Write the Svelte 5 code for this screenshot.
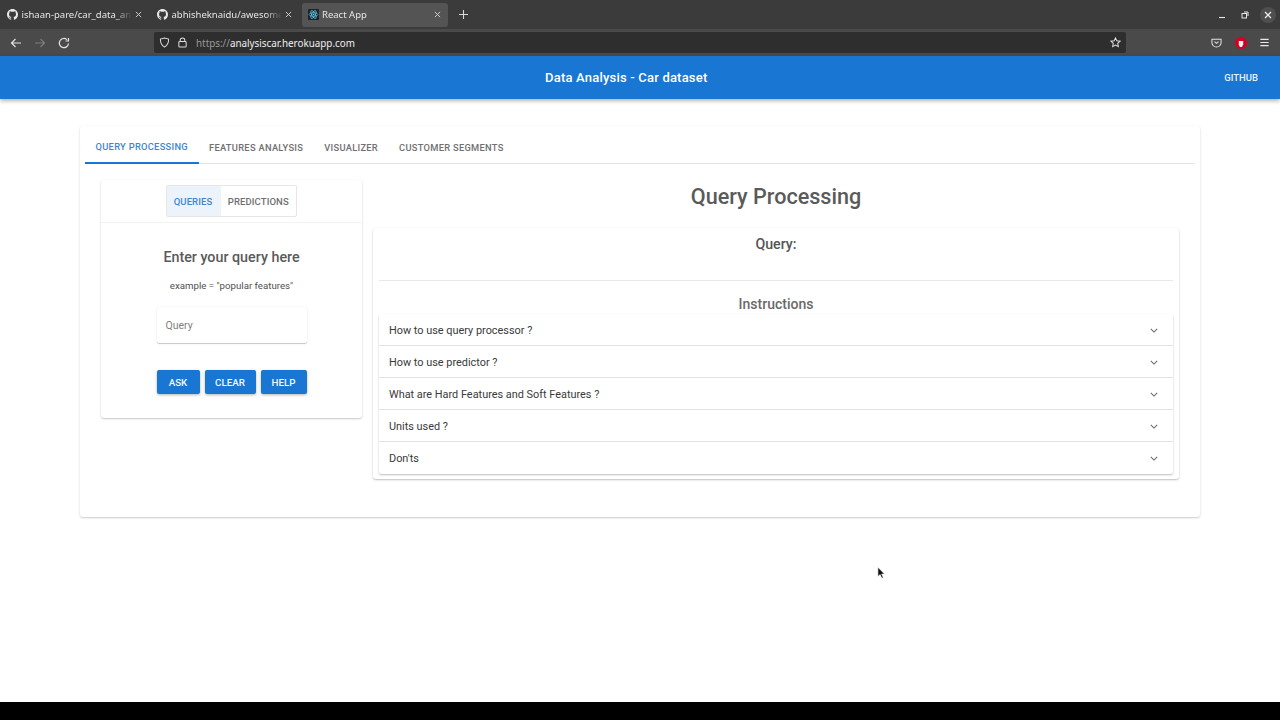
<script>
    const browserTabs = [
        { title: 'ishaan-pare/car_data_analysis', icon: 'github' },
        { title: 'abhisheknaidu/awesome-readme', icon: 'github' },
        { title: 'React App', icon: 'react', active: true }
    ];
    const pageTabs = ['Query Processing', 'Features Analysis', 'Visualizer', 'Customer Segments'];
    const questions = [
        'How to use query processor ?',
        'How to use predictor ?',
        'What are Hard Features and Soft Features ?',
        'Units used ?',
        "Don'ts"
    ];
    const actions = ['Ask', 'Clear', 'Help'];
</script>

<div class="page">
    <header class="chrome">
        <div class="tabstrip">
            {#each browserTabs as tab}
                <div class="btab" class:active={tab.active}>
                    {#if tab.icon === 'github'}
                        <svg class="favicon" viewBox="0 0 16 16"><path fill="#e8e8e8" d="M8 0C3.58 0 0 3.58 0 8c0 3.54 2.29 6.53 5.47 7.59.4.07.55-.17.55-.38v-1.49c-2.01.37-2.53-.49-2.69-.94-.09-.23-.48-.94-.82-1.13-.28-.15-.68-.52-.01-.53.63-.01 1.08.58 1.23.82.72 1.21 1.87.87 2.33.66.07-.52.28-.87.51-1.07-1.78-.2-3.64-.89-3.64-3.95 0-.87.31-1.59.82-2.15-.08-.2-.36-1.02.08-2.12 0 0 .67-.21 2.2.82a7.4 7.4 0 0 1 4 0c1.53-1.04 2.2-.82 2.2-.82.44 1.1.16 1.92.08 2.12.51.56.82 1.27.82 2.15 0 3.07-1.87 3.75-3.65 3.95.29.25.54.73.54 1.48v2.2c0 .21.15.46.55.38A8 8 0 0 0 16 8c0-4.42-3.58-8-8-8z"/></svg>
                    {:else}
                        <svg class="favicon" viewBox="0 0 16 16" fill="none" stroke="#61dafb" stroke-width="0.9"><rect width="16" height="16" rx="1" fill="#20232a" stroke="none"/><ellipse cx="8" cy="8" rx="6.5" ry="2.6"/><ellipse cx="8" cy="8" rx="6.5" ry="2.6" transform="rotate(60 8 8)"/><ellipse cx="8" cy="8" rx="6.5" ry="2.6" transform="rotate(120 8 8)"/><circle cx="8" cy="8" r="1.2" fill="#61dafb" stroke="none"/></svg>
                    {/if}
                    <span class="btitle">{tab.title}</span>
                    <svg class="bclose" viewBox="0 0 8 8"><path d="M1 1l6 6M7 1L1 7" stroke="#cfcfcf" stroke-width="1.1"/></svg>
                </div>
            {/each}
            <svg class="plus" viewBox="0 0 10 10"><path d="M5 0v10M0 5h10" stroke="#d8d8d8" stroke-width="1.2"/></svg>
            <div class="winctl">
                <svg viewBox="0 0 8 8" width="8" height="8"><path d="M1 6.5h6" stroke="#e8e8e8" stroke-width="1.1"/></svg>
                <svg viewBox="0 0 8 8" width="8" height="8" fill="none" stroke="#e8e8e8"><rect x="1" y="2.5" width="4.5" height="4.5"/><path d="M3 1h4v4"/></svg>
                <span class="winclose"><svg viewBox="0 0 8 8" width="8" height="8"><path d="M1 1l6 6M7 1L1 7" stroke="#f0f0f0" stroke-width="1.2"/></svg></span>
            </div>
        </div>
        <div class="toolbar">
            <div class="navs">
                <svg viewBox="0 0 12 12"><path d="M11 6H1.5M5.5 2L1.5 6l4 4" fill="none" stroke="#e2e2e2" stroke-width="1.2"/></svg>
                <svg viewBox="0 0 12 12"><path d="M1 6h9.500M6.500 2l4 4-4 4" fill="none" stroke="#7c7c7c" stroke-width="1.2"/></svg>
                <svg viewBox="0 0 12 12"><path d="M10.500 6.500A4.600 4.600 0 1 1 9 2.600M10.500 1v3H7.500" fill="none" stroke="#e2e2e2" stroke-width="1.2"/></svg>
            </div>
            <div class="urlbar">
                <svg class="shield" viewBox="0 0 12 12"><path d="M6 1l4.500 1.300c0 4-1.200 6.900-4.500 8.700C2.700 9.200 1.500 6.300 1.500 2.300z" fill="none" stroke="#dcdcdc" stroke-width="1.100"/></svg>
                <svg class="lock" viewBox="0 0 12 12"><path d="M3.500 5V3.500a2.500 2.500 0 0 1 5 0V5" fill="none" stroke="#dcdcdc" stroke-width="1.100"/><rect x="2" y="5" width="8" height="6" rx="1" fill="none" stroke="#dcdcdc" stroke-width="1.100"/></svg>
                <span class="url"><span class="scheme">https://</span>analysiscar.herokuapp.com</span>
                <svg class="star" viewBox="0 0 12 12"><path d="M6 1l1.500 3.200 3.500.4-2.600 2.400.7 3.500L6 8.800l-3.100 1.700.7-3.500L1 4.600l3.500-.4z" fill="none" stroke="#e2e2e2" stroke-width="1.100"/></svg>
            </div>
            <div class="extras">
                <svg viewBox="0 0 12 12"><path d="M1 2.500h10v3.500a5 5 0 0 1-10 0z" fill="none" stroke="#e2e2e2" stroke-width="1.100"/><path d="M3.800 5L6 7l2.200-2" fill="none" stroke="#e2e2e2" stroke-width="1.100"/></svg>
                <svg viewBox="0 0 12 12"><circle cx="6" cy="6" r="6" fill="#d70022"/><path d="M3.800 4h4.400v3.500L6.900 10H5L3.800 8z" fill="#f4f4f4"/></svg>
                <svg viewBox="0 0 12 12"><path d="M1.500 2.500h9M1.500 6h9M1.500 9.500h9" stroke="#e8e8e8" stroke-width="1.300"/></svg>
            </div>
        </div>
    </header>

    <div class="appbar">
        <span class="apptitle">Data Analysis - Car dataset</span>
        <span class="github">GitHub</span>
    </div>

    <main>
        <section class="card">
            <nav class="tabs">
                {#each pageTabs as tab, i}
                    <span class="tab" class:selected={i === 0}>{tab}</span>
                {/each}
            </nav>
            <div class="columns">
                <aside class="panel">
                    <div class="panel-top">
                        <div class="toggle">
                            <span class="toggle-on">Queries</span>
                            <span>Predictions</span>
                        </div>
                    </div>
                    <div class="panel-body">
                        <h3>Enter your query here</h3>
                        <p class="example">example = "popular features"</p>
                        <div class="input">Query</div>
                        <div class="actions">
                            {#each actions as label}
                                <button>{label}</button>
                            {/each}
                        </div>
                    </div>
                </aside>
                <div class="content">
                    <h1>Query Processing</h1>
                    <div class="result">
                        <h2>Query:</h2>
                        <hr />
                        <h4>Instructions</h4>
                        <div class="accordion">
                            {#each questions as q}
                                <div class="row">
                                    <span>{q}</span>
                                    <svg viewBox="0 0 10 6" width="8" height="5"><path d="M1 1l4 4 4-4" fill="none" stroke="#666" stroke-width="1.300"/></svg>
                                </div>
                            {/each}
                        </div>
                    </div>
                </div>
            </div>
        </section>
        <svg class="cursor" viewBox="0 0 10 14" width="9" height="14"><path d="M1 0.500v10.500l2.500-2.200 1.800 4 1.700-.8-1.800-3.800h3.200z" fill="#111" stroke="#fff" stroke-width="0.700"/></svg>
    </main>

    <div class="strip"></div>
</div>

<style>
    :global(body) { margin: 0; background: #fff; }
    .page { width: 1280px; height: 720px; display: flex; flex-direction: column; overflow: hidden; font-family: Roboto, "Liberation Sans", sans-serif; }

    .chrome { font-family: "Noto Sans", "Open Sans", sans-serif; }
    .tabstrip { height: 29px; background: #3b3b3b; display: flex; align-items: center; padding-left: 3px; gap: 4px; box-sizing: border-box; }
    .btab { width: 146px; height: 24px; display: flex; align-items: center; padding: 0 7px 0 4px; box-sizing: border-box; color: #e6e6e6; font-size: 9.500px; border-radius: 3px; gap: 3.500px; }
    .btab.active { background: #545454; margin-left: -1px; padding-left: 6px; gap: 3px; }
    .favicon { width: 11px; height: 11px; flex: none; }
    .btitle { flex: 1; white-space: nowrap; overflow: hidden; -webkit-mask-image: linear-gradient(to right, #000 85%, transparent 100%); mask-image: linear-gradient(to right, #000 85%, transparent 100%); }
    .bclose { width: 7px; height: 7px; flex: none; }
    .plus { width: 9px; height: 9px; margin-left: 7px; }
    .winctl { margin-left: auto; display: flex; align-items: center; gap: 15px; padding-right: 4px; }
    .winclose { width: 16px; height: 16px; margin-left: -4px; border-radius: 50%; background: #4f4f4f; display: flex; align-items: center; justify-content: center; }

    .toolbar { height: 27px; background: #4a4a4a; display: flex; align-items: center; }
    .navs { width: 154px; display: flex; gap: 12px; padding-left: 10px; box-sizing: border-box; }
    .navs svg { width: 12px; height: 12px; }
    .urlbar { width: 972px; height: 21px; background: #2e2e2e; border-radius: 2px; display: flex; align-items: center; padding: 0 5px; box-sizing: border-box; color: #f0f0f0; font-size: 9.850px; }
    .shield, .lock, .star { width: 11px; height: 11px; flex: none; }
    .lock { margin-left: 7px; }
    .url { margin-left: 8px; flex: 1; }
    .scheme { color: #9a9a9a; }
    .extras { flex: 1; display: flex; justify-content: flex-end; align-items: center; gap: 12.500px; padding-right: 10px; }
    .extras svg { width: 11px; height: 11px; }
    .extras svg:nth-child(2) { width: 12px; height: 12px; }

    .appbar { height: 43px; flex: none; background: #1976d2; color: #fff; display: flex; align-items: center; box-shadow: 0 2px 4px rgba(0, 0, 0, 0.3); position: relative; }
    .apptitle { margin-left: 545px; font-size: 13px; font-weight: 500; letter-spacing: 0.200px; }
    .github { margin-left: auto; margin-right: 22px; font-size: 9.500px; font-weight: 500; text-transform: uppercase; color: #eaf2fb; }

    main { flex: 1; position: relative; padding-top: 27px; box-sizing: border-box; }
    .card { width: 1120px; height: 391px; margin: 0 auto; padding: 4px 5px; box-sizing: border-box; border-radius: 3px; background: #fff; box-shadow: 0 1px 2px rgba(0, 0, 0, 0.2), 0 0 3px rgba(0, 0, 0, 0.03); }
    .tabs { height: 34px; display: flex; border-bottom: 1px solid #e4e4e4; box-sizing: border-box; }
    .tab { height: 34px; box-sizing: border-box; padding: 0 10.500px; display: flex; align-items: center; font-size: 9.300px; font-weight: 500; text-transform: uppercase; letter-spacing: 0.300px; color: #707070; }
    .tab.selected { color: #3f85cf; border-bottom: 2px solid #1976d2; }

    .columns { display: flex; align-items: flex-start; padding: 16px 16px 0; gap: 11px; }
    .panel { width: 261px; height: 238px; flex: none; border-radius: 3px; box-shadow: 0 1px 2px rgba(0, 0, 0, 0.22), 0 0 2px rgba(0, 0, 0, 0.03); }
    .panel-top { height: 43px; display: flex; justify-content: center; align-items: center; border-bottom: 1px solid #f2f2f2; box-sizing: border-box; }
    .toggle { display: flex; height: 32px; border: 1px solid #e6e6e6; border-radius: 2px; box-sizing: border-box; font-size: 9.500px; font-weight: 500; text-transform: uppercase; color: #707070; }
    .toggle span { display: flex; align-items: center; padding: 0 7.500px 0 7px; letter-spacing: 0.100px; }
    .toggle .toggle-on { background: #edf3fa; color: #3f85cf; border-right: 1px solid #edf3fa; }

    .panel-body { display: flex; flex-direction: column; align-items: center; }
    h3 { margin: 26px 0 0; font-size: 14.300px; line-height: 16px; font-weight: 500; color: #5a5a5a; }
    .example { margin: 15px 0 0; font-size: 9.700px; line-height: 12px; color: #505050; }
    .input { width: 150px; height: 36px; margin-top: 15px; padding-left: 9px; box-sizing: border-box; display: flex; align-items: center; font-size: 10.500px; color: #808080; border-radius: 2px; box-shadow: 0 1px 1px rgba(0, 0, 0, 0.2), 0 0 2px rgba(0, 0, 0, 0.08); }
    .actions { display: grid; grid-template-columns: 43px 51px 46px; gap: 5px; margin-top: 27px; }
    button { height: 24px; padding: 0; border: none; border-radius: 2px; background: #1976d2; color: #f2f7fc; font-family: inherit; font-size: 9.800px; font-weight: 500; text-transform: uppercase; box-shadow: 0 1px 3px rgba(0, 0, 0, 0.3); }

    .content { flex: 1; min-width: 0; }
    h1 { margin: 0; height: 48px; padding-top: 3px; box-sizing: border-box; text-align: center; font-size: 21.600px; line-height: 27px; font-weight: 500; color: #5a5a5a; }
    .result { width: 806px; height: 251px; padding: 7px 6px 0; box-sizing: border-box; border-radius: 3px; box-shadow: 0 1px 2px rgba(0, 0, 0, 0.25), 0 0 2px rgba(0, 0, 0, 0.03); }
    h2 { margin: 0; text-align: center; font-size: 14.200px; line-height: 18px; font-weight: 500; color: #555; }
    hr { margin: 27px 0 0; border: none; border-top: 1px solid #e8e8e8; }
    h4 { margin: 15px 0 0; text-align: center; font-size: 14px; line-height: 16px; font-weight: 500; color: #6a6a6a; }
    .accordion { margin-top: 2px; box-shadow: 0 1px 2px rgba(0, 0, 0, 0.25), 0 0 1px rgba(0, 0, 0, 0.04); border-radius: 2px; }
    .row { height: 32px; padding: 1px 15px 0 10px; box-sizing: border-box; display: flex; align-items: center; justify-content: space-between; font-size: 10.900px; color: #3a3a3a; border-bottom: 1px solid #e2e2e2; }
    .row:last-child { border-bottom-color: transparent; }

    .cursor { position: absolute; left: 877px; top: 467px; }
    .strip { height: 18px; flex: none; background: #000; }
</style>
